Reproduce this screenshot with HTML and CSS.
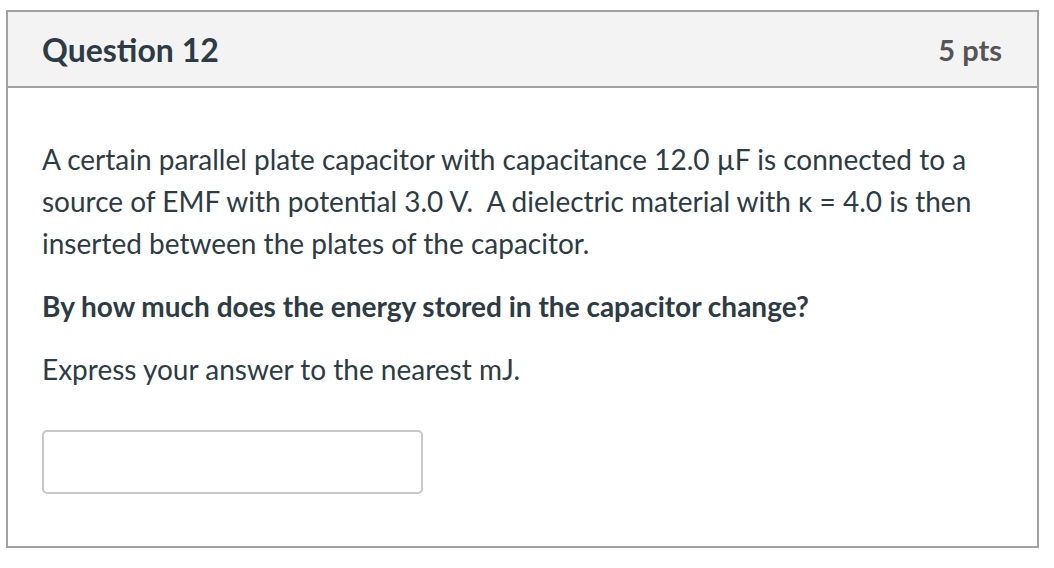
FILE: index.html
```html
<!DOCTYPE html>
<html lang="en">
<head>
<meta charset="utf-8">
<link rel="stylesheet" href="styles.css">
</head>
<body>
<div class="page">
  <div class="question">
    <div class="header">
      <span class="title">Question 12</span>
      <span class="pts">5 pts</span>
    </div>
    <div class="content">
      <p class="text">A certain parallel plate capacitor with capacitance 12.0 µF is connected to a source of EMF with potential 3.0 V.&nbsp; A dielectric material with κ = 4.0 is then inserted between the plates of the capacitor.</p>
      <p class="text bold">By how much does the energy stored in the capacitor change?</p>
      <p class="text">Express your answer to the nearest mJ.</p>
      <div class="answer"><input class="input" type="text"></div>
    </div>
  </div>
</div>
</body>
</html>
```

FILE: styles.css
```css
html, body {
  margin: 0;
  padding: 0;
  background: #ffffff;
}
.page {
  padding: 10px 15px 20px 6px;
}
.question {
  border: 2px solid #a2a2a2;
  height: 534px;
  box-sizing: content-box;
  font-family: Lato, "Liberation Sans", sans-serif;
  color: #2d3b45;
}
.header {
  display: flex;
  justify-content: space-between;
  align-items: center;
  height: 74px;
  padding: 0 35px 0 34px;
  background: #f3f3f3;
  border-bottom: 2px solid #a2a2a2;
}
.title {
  font-size: 32px;
  font-weight: 700;
}
.pts {
  font-size: 29px;
  font-weight: 700;
  color: #555555;
}
.content {
  padding: 50px 34px 0 34px;
}
.text {
  margin: 0 0 21px 0;
  font-size: 28px;
  line-height: 42px;
}
.bold {
  font-weight: 700;
}
.answer {
  padding-top: 19px;
}
.input {
  display: block;
  width: 381px;
  height: 64px;
  box-sizing: border-box;
  border: 2px solid #c7c7c7;
  border-radius: 5px;
  background: #ffffff;
  margin: 0;
}
```
